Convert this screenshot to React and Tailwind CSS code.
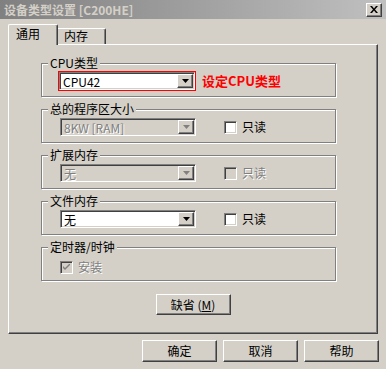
import React from 'react';

const font = { fontFamily: '"Noto Sans CJK SC", "Liberation Sans", sans-serif' };

const raised =
  'border border-t-white border-l-white border-r-[#404040] border-b-[#404040] shadow-[inset_-1px_-1px_0_#808080]';
const sunken =
  'border border-t-[#808080] border-l-[#808080] border-r-white border-b-white shadow-[inset_1px_1px_0_#404040,inset_-1px_-1px_0_#d4d0c8]';
const disabledText = 'text-[#808080] [text-shadow:1px_1px_0_#fff]';

const Arrow = ({ disabled }) => (
  <svg width="7" height="4" viewBox="0 0 7 4">
    <path d="M0 0h7L3.5 4z" fill={disabled ? '#808080' : '#000'} />
  </svg>
);

const Combo = ({ value, disabled, width = 'w-[136px]' }) => (
  <div className={`${sunken} ${width} h-[18px] flex items-stretch p-[1px] ${disabled ? 'bg-[#d4d0c8]' : 'bg-white'}`}>
    <span className={`flex-1 pl-[2px] text-[12px] leading-[14px] pt-[1px] ${disabled ? disabledText : 'text-black'}`}>
      {value}
    </span>
    <span className={`${raised} w-[16px] bg-[#d4d0c8] flex items-center justify-center`}>
      <Arrow disabled={disabled} />
    </span>
  </div>
);

const CheckBox = ({ label, checked, disabled }) => (
  <label className="flex items-center gap-[5px]">
    <span className={`${sunken} w-[13px] h-[13px] flex items-center justify-center ${disabled ? 'bg-[#d4d0c8]' : 'bg-white'}`}>
      {checked && (
        <svg width="7" height="7" viewBox="0 0 7 7">
          <path d="M0 2l2 2 5-5v2L2 6 0 4z" fill={disabled ? '#808080' : '#000'} />
        </svg>
      )}
    </span>
    <span className={`text-[12px] leading-[14px] ${disabled ? disabledText : 'text-black'}`}>{label}</span>
  </label>
);

const Group = ({ title, children, className = '' }) => (
  <div className={`relative h-[34px] border border-[#808080] shadow-[inset_1px_1px_0_#fff,1px_1px_0_#fff] ${className}`}>
    <span className="absolute -top-[8px] left-[6px] px-[2px] bg-[#d4d0c8] text-[12px] leading-[14px] text-black">
      {title}
    </span>
    {children}
  </div>
);

const Button = ({ children, className = '' }) => (
  <button className={`${raised} bg-[#d4d0c8] w-[75px] text-[12px] leading-[14px] text-black ${className}`}>
    {children}
  </button>
);

export default function App() {
  return (
    <div className="w-[386px] h-[369px] bg-[#d4d0c8] flex flex-col overflow-hidden" style={font}>
      {/* Title bar */}
      <div className="h-[19px] bg-gradient-to-r from-[#808080] to-[#c0c0c0] flex items-center justify-between pl-[4px] pr-[4px]">
        <span className="text-[12px] leading-[14px] font-bold text-[#d4d0c8]">设备类型设置 [C200HE]</span>
        <span className={`${raised} bg-[#d4d0c8] w-[16px] h-[14px] flex items-center justify-center`}>
          <svg width="8" height="7" viewBox="0 0 8 7">
            <path d="M0 0h2l2 2.5L6 0h2L5 3.5 8 7H6L4 4.5 2 7H0l3-3.5z" fill="#000" />
          </svg>
        </span>
      </div>

      {/* Tabs */}
      <div className="mt-[5px] ml-[8px] flex items-end h-[20px]">
        <div className="relative z-10 -mb-[1px] h-[21px] w-[50px] bg-[#d4d0c8] border-t border-l border-t-white border-l-white border-r border-r-[#404040] shadow-[inset_-1px_0_0_#808080] rounded-t-[2px] flex items-start pt-[2px] pl-[7px] text-[12px] leading-[14px] text-black">
          通用
        </div>
        <div className="h-[16px] w-[48px] border-t border-t-white border-r border-r-[#404040] shadow-[inset_-1px_0_0_#808080] rounded-tr-[2px] pl-[6px] text-[12px] leading-[14px] text-black">
          内存
        </div>
      </div>

      {/* Tab page */}
      <div className={`ml-[8px] w-[370px] h-[290px] ${raised} bg-[#d4d0c8] flex flex-col`}>
        <div className="ml-[32px] mt-[18px] w-[295px] flex flex-col gap-[12px]">
          <Group title="CPU类型">
            <div className="flex items-center pl-[16px] pt-[7px]">
              <div className="border border-[#ff0000] p-0">
                <Combo value="CPU42" width="w-[136px]" />
              </div>
              <span className="ml-[6px] text-[13px] leading-[14px] font-bold text-[#ff0000]">设定CPU类型</span>
            </div>
          </Group>
          <Group title="总的程序区大小">
            <div className="flex items-center pl-[18px] pt-[8px]">
              <Combo value="8KW [RAM]" disabled />
              <div className="ml-[28px]">
                <CheckBox label="只读" />
              </div>
            </div>
          </Group>
          <Group title="扩展内存">
            <div className="flex items-center pl-[18px] pt-[8px]">
              <Combo value="无" disabled />
              <div className="ml-[28px]">
                <CheckBox label="只读" disabled />
              </div>
            </div>
          </Group>
          <Group title="文件内存">
            <div className="flex items-center pl-[18px] pt-[8px]">
              <Combo value="无" />
              <div className="ml-[28px]">
                <CheckBox label="只读" />
              </div>
            </div>
          </Group>
          <Group title="定时器/时钟">
            <div className="flex items-center pl-[18px] pt-[12px]">
              <CheckBox label="安装" checked disabled />
            </div>
          </Group>
        </div>
        <div className="mt-[13px] flex justify-center">
          <Button className="h-[21px]">缺省 (<u>M</u>)</Button>
        </div>
      </div>

      {/* Dialog buttons */}
      <div className="mt-[6px] flex justify-end gap-[6px] pr-[7px]">
        <Button className="h-[22px]">确定</Button>
        <Button className="h-[22px]">取消</Button>
        <Button className="h-[22px]">帮助</Button>
      </div>
    </div>
  );
}
